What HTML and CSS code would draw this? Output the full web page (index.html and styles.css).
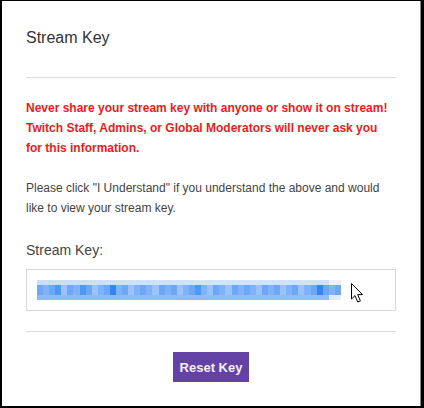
FILE: index.html
```html
<!DOCTYPE html>
<html>
<head>
<meta charset="utf-8">
<link rel="stylesheet" href="styles.css">
</head>
<body>
<div class="modal">
  <h1 class="title">Stream Key</h1>
  <hr class="divider">
  <p class="warning">Never share your stream key with anyone or show it on stream! Twitch Staff, Admins, or Global Moderators will never ask you for this information.</p>
  <p class="info">Please click "I Understand" if you understand the above and would like to view your stream key.</p>
  <div class="label">Stream Key:</div>
  <div class="keybox">
    <div class="blur">
      <div class="band top"></div>
      <div class="band mid">
        <span class="b a"></span><span class="b c"></span><span class="b a"></span><span class="b d"></span><span class="b b2"></span><span class="b a"></span><span class="b c"></span><span class="b d"></span><span class="b a"></span><span class="b b2"></span><span class="b c"></span><span class="b a"></span><span class="b e"></span><span class="b c"></span><span class="b a"></span><span class="b b2"></span><span class="b c"></span><span class="b a"></span><span class="b c"></span><span class="b b2"></span><span class="b a"></span><span class="b c"></span><span class="b a"></span><span class="b b2"></span><span class="b c"></span><span class="b a"></span><span class="b d"></span><span class="b c"></span><span class="b b2"></span><span class="b a"></span><span class="b c"></span><span class="b b2"></span><span class="b a"></span><span class="b c"></span><span class="b a"></span><span class="b c"></span><span class="b b2"></span><span class="b a"></span><span class="b c"></span><span class="b a"></span><span class="b b2"></span><span class="b c"></span><span class="b a"></span><span class="b b2"></span><span class="b c"></span><span class="b a"></span><span class="b e"></span><span class="b a"></span><span class="b c"></span><span class="b a"></span>
      </div>
      <div class="band bot"></div>
    </div>
    <svg class="cursor" width="14" height="22" viewBox="0 0 14 22">
      <path d="M1.5 1.5 L1.5 17 L5 13.6 L7.8 20 L10.4 18.9 L7.7 12.6 L12.5 12.6 Z" fill="#fff" stroke="#000" stroke-width="1" stroke-linejoin="miter"/>
    </svg>
  </div>
  <hr class="divider bottom">
  <div class="actions">
    <button class="btn">Reset Key</button>
  </div>
</div>
</body>
</html>
```
FILE: styles.css
```css
html, body {
  margin: 0;
  padding: 0;
  background: #fff;
}
.modal {
  box-sizing: border-box;
  width: 424px;
  height: 408px;
  border-style: solid;
  border-color: #000;
  border-width: 1px 3px 2px 2px;
  padding: 0 25px 0 24px;
  font-family: "Liberation Sans", Arial, sans-serif;
  background: #fff;
  box-shadow: inset -1px 0 0 #888;
}
.title {
  margin: 0;
  padding-top: 27px;
  font-size: 16px;
  line-height: 20px;
  font-weight: normal;
  color: #333;
}
.divider {
  margin: 29px 0 0 0;
  border: 0;
  border-top: 1px solid #dcdcdc;
  height: 0;
}
.warning {
  margin: 20px 0 0 0;
  font-size: 12px;
  line-height: 20px;
  font-weight: bold;
  color: #ea1b1b;
}
.info {
  margin: 20px 0 0 0;
  font-size: 12px;
  line-height: 20px;
  color: #444;
}
.label {
  margin-top: 22px;
  font-size: 14px;
  line-height: 20px;
  color: #444;
}
.keybox {
  margin-top: 9px;
  height: 42px;
  box-sizing: border-box;
  border: 1px solid #d8d8dc;
  display: flex;
  align-items: center;
  padding-left: 10px;
}
.blur {
  display: flex;
  flex-direction: column;
  width: 304px;
}
.band {
  height: 5px;
}
.band.top {
  background: linear-gradient(90deg, #c9defb 0, #d2e4fc 60%, #d0e2fb 96%, #eaf2fe 96%);
}
.band.bot {
  background: linear-gradient(90deg, #8bbaf7 0, #91bdf8 96%, #e0ecfd 96%);
}
.band.mid {
  height: 10px;
  display: flex;
}
.b {
  flex: 1;
  height: 10px;
}
.b.a { background: #6ea7f4; }
.b.b2 { background: #9cc3f8; }
.b.c { background: #7fb2f6; }
.b.d { background: #4d97f5; }
.b.e { background: #2f86f4; }
.cursor {
  margin-left: 9px;
  margin-top: 6px;
}
.divider.bottom {
  margin-top: 20px;
}
.actions {
  display: flex;
  justify-content: center;
  margin-top: 20px;
}
.btn {
  width: 76px;
  height: 30px;
  border: 0;
  background: #6441a4;
  color: #f4f0fb;
  font-family: "Liberation Sans", Arial, sans-serif;
  font-weight: bold;
  font-size: 13px;
  padding: 0;
}
```
